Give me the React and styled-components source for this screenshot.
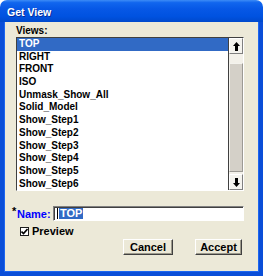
import React from 'react'
import styled, { createGlobalStyle } from 'styled-components'

const GlobalStyle = createGlobalStyle`
  html, body {
    margin: 0;
    padding: 0;
    background: #ffffff;
  }
  body {
    font-family: "Liberation Sans", Arial, sans-serif;
  }
`

const Window = styled.div`
  width: 263px;
  height: 276px;
  display: flex;
  flex-direction: column;
  box-sizing: border-box;
`

const TitleBar = styled.div`
  height: 22px;
  flex: none;
  display: flex;
  align-items: center;
  padding-left: 7px;
  border-radius: 7px 7px 0 0;
  background: linear-gradient(to bottom, #3d8cf6 0%, #1166ee 12%, #0758e6 40%, #0052e0 75%, #0049cc 100%);
`

const Title = styled.span`
  font-size: 10.5px;
  font-weight: bold;
  color: #ffffff;
  text-shadow: 1px 1px 0 #0a2f9a;
  margin-top: 1px;
`

const Body = styled.div`
  flex: 1;
  display: flex;
  flex-direction: column;
  background: #ece9d8;
  border: 4px solid #0a4ed8;
  border-top: none;
  box-shadow: inset 1px 0 0 #1d66f0, inset -1px 0 0 #1d66f0, inset 0 -1px 0 #1d66f0;
  padding: 2px 15px 0 12px;
`

const Label = styled.div`
  height: 13px;
  line-height: 13px;
  font-size: 10px;
  font-weight: bold;
  color: #000000;
`

const ListBox = styled.div`
  width: 228px;
  height: 154px;
  box-sizing: border-box;
  display: flex;
  border-style: solid;
  border-width: 1px;
  border-color: #404040 #ffffff #ffffff #404040;
  background: #ffffff;
`

const Items = styled.div`
  flex: 1;
  display: flex;
  flex-direction: column;
`

const Item = styled.div`
  height: 12.7px;
  line-height: 12.7px;
  padding-left: 2px;
  font-size: 10px;
  font-weight: bold;
  white-space: nowrap;
  color: ${props => (props.selected ? '#ffffff' : '#000000')};
  background: ${props => (props.selected ? '#316ac5' : 'transparent')};
`

const ScrollBar = styled.div`
  width: 14px;
  display: flex;
  flex-direction: column;
  border-left: 1px solid #404040;
`

const ScrollButton = styled.div`
  height: 16px;
  flex: none;
  box-sizing: border-box;
  display: flex;
  align-items: center;
  justify-content: center;
  background: #f4f3ee;
  border-style: solid;
  border-width: 1px;
  border-color: #ffffff #808080 #808080 #ffffff;
`

const Track = styled.div`
  flex: 1;
  display: flex;
  flex-direction: column;
  padding: 9px 0 2px;
  background: #f3f1ea;
`

const Thumb = styled.div`
  flex: 1;
  box-sizing: border-box;
  background: #d4d0c8;
  border-style: solid;
  border-width: 1px;
  border-color: #f4f3ee #9c9a94 #9c9a94 #f4f3ee;
`

const NameRow = styled.div`
  display: flex;
  align-items: center;
  height: 15px;
  margin: 15px 0 0 -4px;
`

const Star = styled.span`
  width: 5px;
  font-size: 11px;
  font-weight: bold;
  color: #000000;
  align-self: flex-start;
  line-height: 11px;
`

const NameLabel = styled.span`
  font-size: 11px;
  font-weight: bold;
  color: #0000ff;
  margin-left: 0;
  width: 36px;
`

const Input = styled.div`
  width: 191px;
  height: 15px;
  box-sizing: border-box;
  display: flex;
  align-items: center;
  background: #ffffff;
  border-style: solid;
  border-width: 1px;
  border-color: #808080 #ffffff #ffffff #808080;
  box-shadow: inset 1px 1px 0 #404040;
  padding-left: 3px;
`

const Caret = styled.span`
  width: 1px;
  height: 11px;
  background: #000000;
  margin-right: 1px;
`

const Selected = styled.span`
  font-size: 11px;
  font-weight: bold;
  line-height: 11px;
  padding: 0 1px;
  color: #ffffff;
  background: #316ac5;
`

const CheckRow = styled.label`
  display: flex;
  align-items: center;
  height: 12px;
  margin-top: 4px;
  padding-left: 4px;
  gap: 3px;
  font-size: 11px;
  font-weight: bold;
  color: #000000;
`

const CheckBox = styled.span`
  width: 9px;
  height: 9px;
  box-sizing: border-box;
  display: flex;
  align-items: center;
  justify-content: center;
  background: #ffffff;
  border: 1px solid #1c1c1c;
`

const ButtonRow = styled.div`
  display: flex;
  justify-content: flex-end;
  gap: 22px;
  margin-top: 2px;
  padding-right: 2px;
`

const Button = styled.div`
  width: ${props => props.width}px;
  height: 16px;
  box-sizing: border-box;
  display: flex;
  align-items: center;
  justify-content: center;
  background: #ece9d8;
  border-style: solid;
  border-width: 1px;
  border-color: #ffffff #404040 #404040 #ffffff;
  box-shadow: inset -1px -1px 0 #9d9a8c;
  font-size: 11px;
  font-weight: bold;
  color: #000000;
`

const ArrowUp = () => (
  <svg width="7" height="9" viewBox="0 0 7 9">
    <path d="M3.5 0 L7 4 L5 4 L5 9 L2 9 L2 4 L0 4 Z" fill="#000" />
  </svg>
)

const ArrowDown = () => (
  <svg width="7" height="9" viewBox="0 0 7 9">
    <path d="M3.5 9 L7 5 L5 5 L5 0 L2 0 L2 5 L0 5 Z" fill="#000" />
  </svg>
)

const Check = () => (
  <svg width="7" height="7" viewBox="0 0 7 7">
    <path d="M0.5 3.5 L2.5 5.5 L6.5 1" stroke="#000" strokeWidth="1.6" fill="none" />
  </svg>
)

const views = [
  'TOP', 'RIGHT', 'FRONT', 'ISO', 'Unmask_Show_All', 'Solid_Model',
  'Show_Step1', 'Show_Step2', 'Show_Step3', 'Show_Step4', 'Show_Step5', 'Show_Step6',
]

const App = () => (
  <>
    <GlobalStyle />
    <Window>
      <TitleBar>
        <Title>Get View</Title>
      </TitleBar>
      <Body>
        <Label>Views:</Label>
        <ListBox>
          <Items>
            {views.map((v, i) => (
              <Item key={v} selected={i === 0}>{v}</Item>
            ))}
          </Items>
          <ScrollBar>
            <ScrollButton><ArrowUp /></ScrollButton>
            <Track><Thumb /></Track>
            <ScrollButton><ArrowDown /></ScrollButton>
          </ScrollBar>
        </ListBox>
        <NameRow>
          <Star>*</Star>
          <NameLabel>Name:</NameLabel>
          <Input>
            <Caret />
            <Selected>TOP</Selected>
          </Input>
        </NameRow>
        <CheckRow>
          <CheckBox><Check /></CheckBox>
          Preview
        </CheckRow>
        <ButtonRow>
          <Button width={50}>Cancel</Button>
          <Button width={47}>Accept</Button>
        </ButtonRow>
      </Body>
    </Window>
  </>
)

export default App
